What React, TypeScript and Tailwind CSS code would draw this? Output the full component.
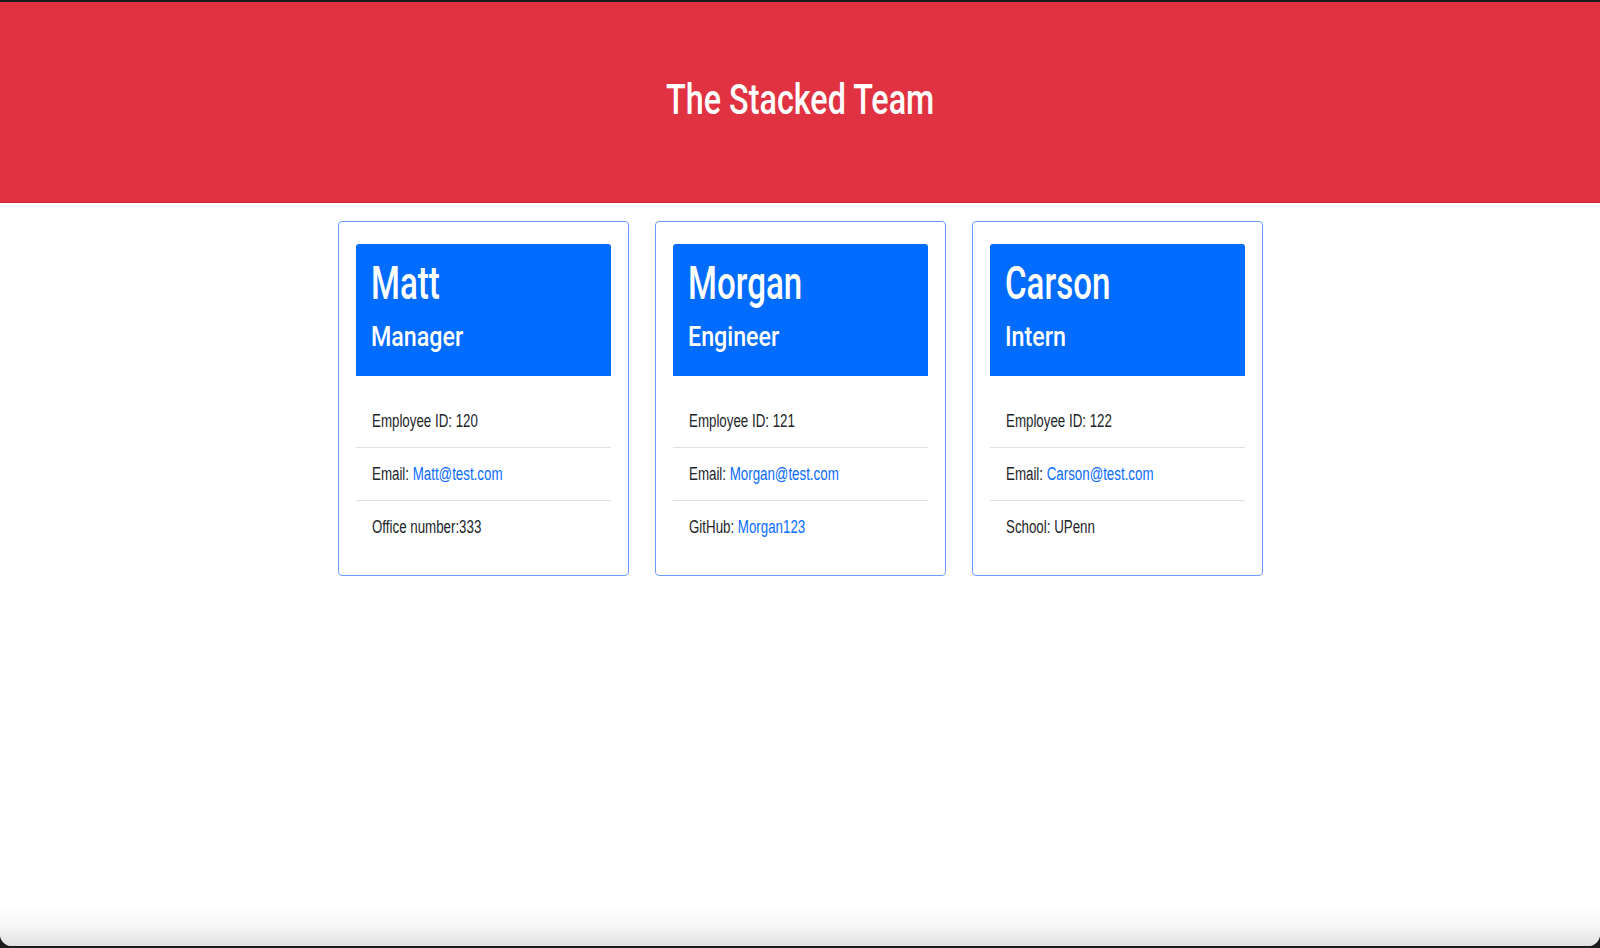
import type { ReactNode } from "react";
import clsx from "clsx";

const team = [
  { name: "Matt", role: "Manager", id: 120, email: "Matt@test.com", label: "Office number:333", link: "" },
  { name: "Morgan", role: "Engineer", id: 121, email: "Morgan@test.com", label: "GitHub: ", link: "Morgan123" },
  { name: "Carson", role: "Intern", id: 122, email: "Carson@test.com", label: "School: UPenn", link: "" },
];

// the reference is squeezed horizontally, so text gets narrowed to match
function Narrow({ children, className }: { children: ReactNode; className?: string }) {
  return <span className={clsx("inline-block whitespace-nowrap", className ?? "origin-left scale-x-[74%]")}>{children}</span>;
}

function Card({ m }: { m: (typeof team)[number] }) {
  return (
    <div className="rounded-[4px] border border-[#6b9bff] px-[17px] pt-[22px] pb-[22px]">
      <div className="h-[132px] rounded-t-[3px] bg-[#016cfe] px-[15px] pt-[12px] font-['Roboto',sans-serif] text-white">
        <h2 className="text-[46px] leading-[55px] font-medium">
          <Narrow className="origin-left scale-x-[72%]">{m.name}</Narrow>
        </h2>
        <h3 className="mt-[9px] text-[28px] leading-[34px] font-medium">
          <Narrow className="origin-left scale-x-[83%]">{m.role}</Narrow>
        </h3>
      </div>
      <ul className="mt-[19px] text-[18px] leading-[28px] text-[#212529]">
        <li className="px-[16px] py-[12px]">
          <Narrow>Employee ID: {m.id}</Narrow>
        </li>
        <li className="border-t border-[#dfdfdf] px-[16px] py-[12px]">
          <Narrow>
            Email: <a href={`mailto:${m.email}`} className="text-[#0a6cff]">{m.email}</a>
          </Narrow>
        </li>
        <li className="border-t border-[#dfdfdf] px-[16px] py-[12px]">
          <Narrow>
            {m.label}
            {m.link && <a href="#" className="text-[#0a6cff]">{m.link}</a>}
          </Narrow>
        </li>
      </ul>
    </div>
  );
}

export default function App() {
  return (
    <div className="flex h-[948px] flex-col bg-[#1c1c1c] font-['Liberation_Sans',Arial,sans-serif]">
      <div className="h-[2px] shrink-0" />
      <div className="flex flex-1 flex-col overflow-hidden rounded-b-[12px] bg-white">
        <header className="h-[201px] shrink-0 border-b border-[#c92a38] bg-[#e13242] pt-[73px] text-center">
          <h1 className="font-['Roboto',sans-serif] text-[42px] leading-[50px] font-medium text-white">
            <Narrow className="origin-center scale-x-[77%]">The Stacked Team</Narrow>
          </h1>
        </header>
        <main className="mx-auto mt-[18px] grid w-[925px] grid-cols-3 gap-[26px]">
          {team.map((m) => (
            <Card key={m.id} m={m} />
          ))}
        </main>
        <div className="flex-1" />
        <div className="h-[42px] shrink-0 bg-linear-to-b from-white via-[#f6f6f6] to-[#e2e2e2]" />
      </div>
      <div className="h-[2px] shrink-0" />
    </div>
  );
}
